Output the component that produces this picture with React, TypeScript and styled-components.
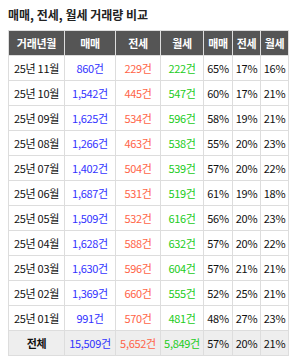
import * as React from 'react';
import styled, { createGlobalStyle } from 'styled-components';

type Row = {
  month: string;
  sale: string;
  jeonse: string;
  monthly: string;
  saleRate: string;
  jeonseRate: string;
  monthlyRate: string;
};

const rows: Row[] = [
  { month: '25년 11월', sale: '860건', jeonse: '229건', monthly: '222건', saleRate: '65%', jeonseRate: '17%', monthlyRate: '16%' },
  { month: '25년 10월', sale: '1,542건', jeonse: '445건', monthly: '547건', saleRate: '60%', jeonseRate: '17%', monthlyRate: '21%' },
  { month: '25년 09월', sale: '1,625건', jeonse: '534건', monthly: '596건', saleRate: '58%', jeonseRate: '19%', monthlyRate: '21%' },
  { month: '25년 08월', sale: '1,266건', jeonse: '463건', monthly: '538건', saleRate: '55%', jeonseRate: '20%', monthlyRate: '23%' },
  { month: '25년 07월', sale: '1,402건', jeonse: '504건', monthly: '539건', saleRate: '57%', jeonseRate: '20%', monthlyRate: '22%' },
  { month: '25년 06월', sale: '1,687건', jeonse: '531건', monthly: '519건', saleRate: '61%', jeonseRate: '19%', monthlyRate: '18%' },
  { month: '25년 05월', sale: '1,509건', jeonse: '532건', monthly: '616건', saleRate: '56%', jeonseRate: '20%', monthlyRate: '23%' },
  { month: '25년 04월', sale: '1,628건', jeonse: '588건', monthly: '632건', saleRate: '57%', jeonseRate: '20%', monthlyRate: '22%' },
  { month: '25년 03월', sale: '1,630건', jeonse: '596건', monthly: '604건', saleRate: '57%', jeonseRate: '21%', monthlyRate: '21%' },
  { month: '25년 02월', sale: '1,369건', jeonse: '660건', monthly: '555건', saleRate: '52%', jeonseRate: '25%', monthlyRate: '21%' },
  { month: '25년 01월', sale: '991건', jeonse: '570건', monthly: '481건', saleRate: '48%', jeonseRate: '27%', monthlyRate: '23%' },
];

const total: Row = { month: '전체', sale: '15,509건', jeonse: '5,652건', monthly: '5,849건', saleRate: '57%', jeonseRate: '20%', monthlyRate: '21%' };

const widths = [56, 51, 45, 43, 29, 28, 28];
const heads = ['거래년월', '매매', '전세', '월세', '매매', '전세', '월세'];

export default function App() {
  const renderRow = (r: Row, isTotal = false) => (
    <BodyRow key={r.month} $total={isTotal}>
      <Cell $bold={isTotal}>{r.month}</Cell>
      <Cell $color="#3333ff">{r.sale}</Cell>
      <Cell $color="#ff6347">{r.jeonse}</Cell>
      <Cell $color="#22cc22">{r.monthly}</Cell>
      <Cell>{r.saleRate}</Cell>
      <Cell>{r.jeonseRate}</Cell>
      <Cell>{r.monthlyRate}</Cell>
    </BodyRow>
  );

  return (
    <React.Fragment>
      <GlobalStyle />
      <Wrapper>
        <Title>매매, 전세, 월세 거래량 비교</Title>
        <Table>
          <colgroup>
            {widths.map((w, i) => (
              <col key={i} style={{ width: w }} />
            ))}
          </colgroup>
          <thead>
            <tr>
              {heads.map((h, i) => (
                <HeadCell key={i}>{h}</HeadCell>
              ))}
            </tr>
          </thead>
          <tbody>
            {rows.map((r) => renderRow(r))}
            {renderRow(total, true)}
          </tbody>
        </Table>
      </Wrapper>
    </React.Fragment>
  );
}

const GlobalStyle = createGlobalStyle`
  body {
    margin: 0;
    background: #ffffff;
    font-family: "Noto Sans CJK KR", "Noto Sans", sans-serif;
    color: #222222;
  }
`;

const Wrapper = styled.div`
  padding: 8px 8px 0;
`;

const Title = styled.div`
  font-size: 12px;
  font-weight: bold;
  color: #222222;
  line-height: 14px;
  margin: 0 0 8px;
`;

const Table = styled.table`
  border-collapse: collapse;
  table-layout: fixed;
  width: 280px;
  font-size: 11px;
  letter-spacing: -0.3px;
`;

const HeadCell = styled.th`
  background: #555555;
  color: #ffffff;
  font-weight: bold;
  height: 24px;
  padding: 0;
  text-align: center;
  border: 1px solid #dddddd;
  white-space: nowrap;
`;

const BodyRow = styled.tr<{ $total?: boolean }>`
  background: ${(p) => (p.$total ? '#eeeeee' : '#ffffff')};
`;

const Cell = styled.td<{ $color?: string; $bold?: boolean }>`
  height: 24px;
  padding: 0;
  text-align: center;
  border: 1px solid #dddddd;
  color: ${(p) => p.$color || '#111111'};
  font-weight: ${(p) => (p.$bold ? 'bold' : 'normal')};
  white-space: nowrap;
`;
